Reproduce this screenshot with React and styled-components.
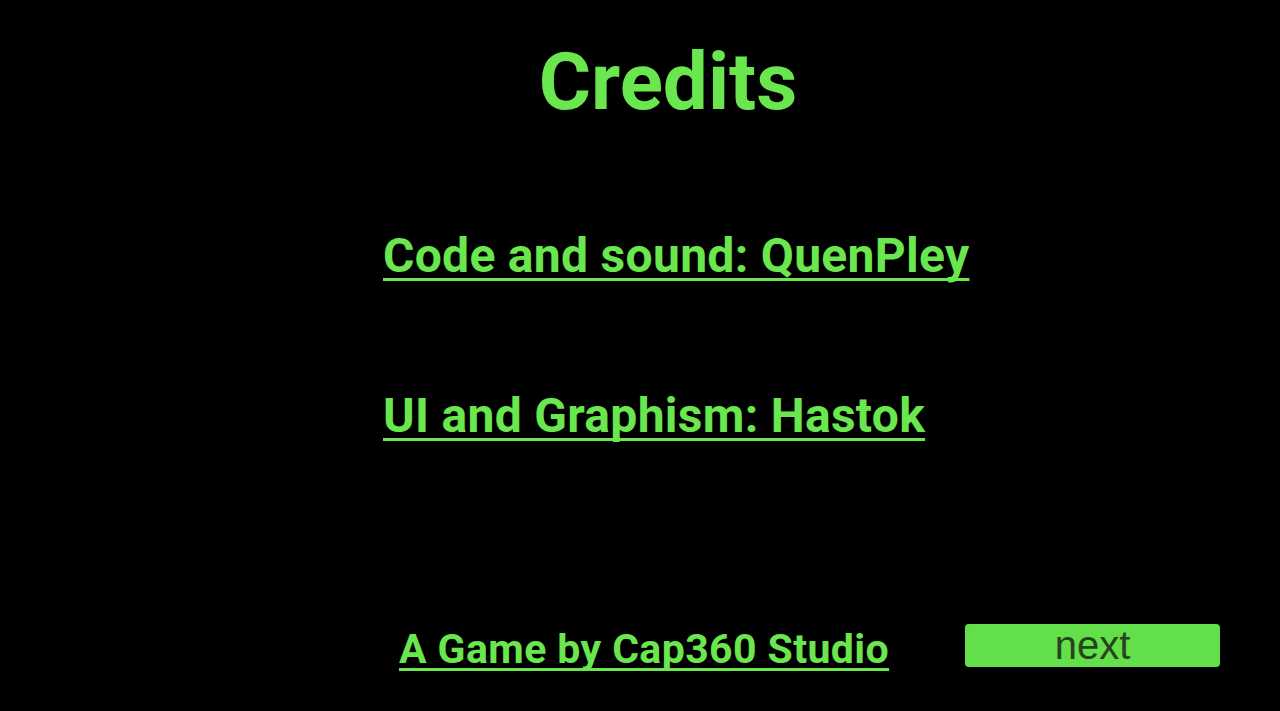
import React from "react";
import styled, { createGlobalStyle } from "styled-components";

const GlobalStyle = createGlobalStyle`
  html, body {
    margin: 0;
    padding: 0;
    background: #000;
  }
  body {
    font-family: Roboto, "Noto Sans", sans-serif;
  }
`;

const StyledScreen = styled.div`
  display: flex;
  flex-direction: column;
  width: 1280px;
  height: 711px;
  background: #000;
  color: #6ae64e;
  overflow: hidden;
`;

const StyledTitle = styled.h1`
  margin: 42px 0 0 56px;
  font-size: 80px;
  line-height: 80px;
  font-weight: 700;
  text-align: center;
`;

const StyledCredits = styled.div`
  display: flex;
  flex-direction: column;
  align-items: flex-start;
  gap: 104px;
  margin: 106px 0 0 383px;
`;

const StyledLine = styled.p`
  margin: 0;
  font-size: 48px;
  line-height: 56px;
  font-weight: 700;
  letter-spacing: 0.3px;
  text-decoration: underline;
  text-decoration-thickness: 3px;
  text-underline-offset: 6px;
  text-decoration-skip-ink: none;
  cursor: pointer;
`;

const StyledFooter = styled.div`
  display: flex;
  align-items: flex-start;
  margin-top: auto;
  margin-bottom: 38px;
  padding-left: 399px;
`;

const StyledStudio = styled(StyledLine)`
  font-size: 41px;
  line-height: 48px;
  letter-spacing: 0.4px;
  text-underline-offset: 5px;
`;

const StyledNext = styled.button`
  width: 255px;
  height: 43px;
  margin: -1px 0 0 76px;
  padding: 0;
  border: none;
  border-radius: 4px;
  background: #63df49;
  color: #27441f;
  font-family: "Liberation Sans", Arial, sans-serif;
  font-size: 40px;
  line-height: 43px;
  cursor: pointer;
`;

const credits = ["Code and sound: QuenPley", "UI and Graphism: Hastok"];

export default function App() {
  return (
    <>
      <GlobalStyle />
      <StyledScreen>
        <StyledTitle>Credits</StyledTitle>
        <StyledCredits>
          {credits.map((c) => (
            <StyledLine key={c}>{c}</StyledLine>
          ))}
        </StyledCredits>
        <StyledFooter>
          <StyledStudio>A Game by Cap360 Studio</StyledStudio>
          <StyledNext>next</StyledNext>
        </StyledFooter>
      </StyledScreen>
    </>
  );
}
